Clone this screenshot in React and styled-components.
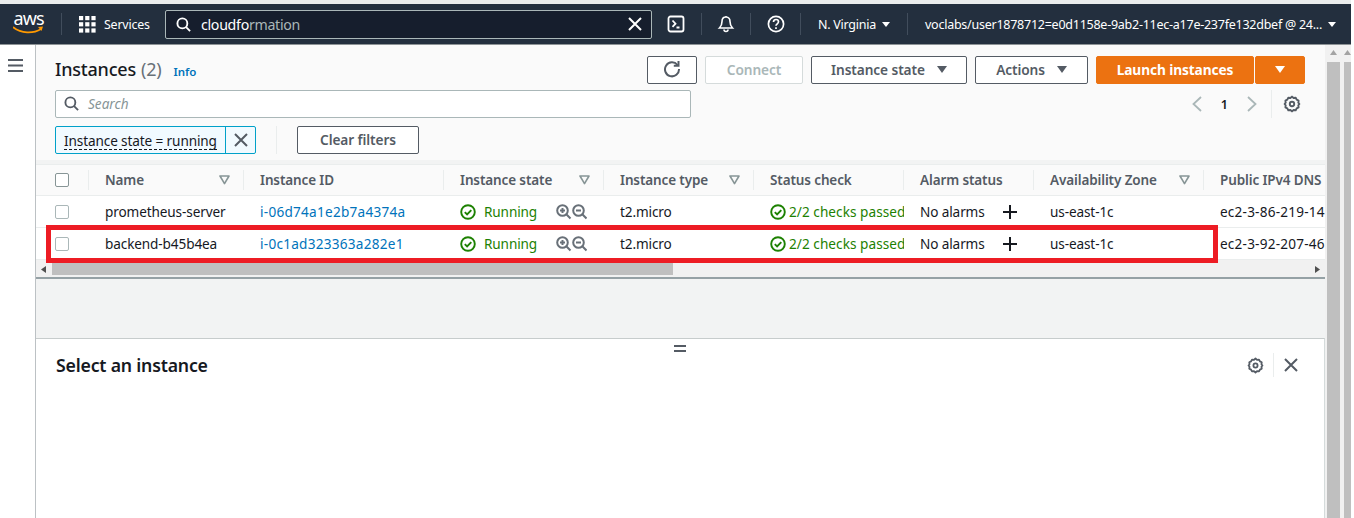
import React from 'react';
import styled, { createGlobalStyle } from 'styled-components';

const FONT = `"Noto Sans", "Open Sans", "Liberation Sans", sans-serif`;

const Global = createGlobalStyle`
  html, body { margin: 0; padding: 0; height: 518px; overflow: hidden; background: #fff; }
  * { box-sizing: border-box; }
  body { font-family: ${FONT}; }
`;

const Page = styled.div`
  width: 1354px; height: 518px; overflow: hidden; display: flex; flex-direction: column; position: relative;
  background: #fff; font-size: 13.6px; color: #16191f;
`;
const TopStrip = styled.div`height: 4px; background: #eaeded; flex: none; width: 1351px;`;
const Header = styled.header`
  height: 41px; flex: none; background: #232f3e; border-bottom: 1px solid #8d9396;
  display: flex; align-items: center; color: #fff; padding-left: 13px; width: 1351px;
`;
const Logo = styled.svg`width: 36px; height: 31px; margin-bottom: 5px; flex: none;`;
const Sep = styled.div`width: 1px; height: 22px; background: #414d5c; flex: none; margin: ${p => p.$m || '0'};`;
const Services = styled.div`display: flex; align-items: center; gap: 8px; font-size: 12.4px; letter-spacing: -0.2px; width: 86px; flex: none;`;
const Grid = styled.svg`width: 17px; height: 17px; flex: none;`;
const SearchBox = styled.div`
  width: 487px; height: 29px; flex: none; background: #161e2d; border: 1px solid #aab7b8; border-radius: 2px;
  display: flex; align-items: center; padding: 0 9px 0 10px; font-size: 14.2px; letter-spacing: -0.3px;
`;
const Typed = styled.span`flex: 1; margin-left: 10px; color: #fff;`;
const Rest = styled.span`color: #aab7b8;`;
const HeadIcon = styled.svg`width: 18px; height: 18px; flex: none; margin: ${p => p.$m || '0'};`;
const Region = styled.div`display: flex; align-items: center; gap: 6px; font-size: 12.5px; letter-spacing: -0.25px; flex: none; white-space: nowrap;`;
const Caret = styled.span`
  width: 0; height: 0; border-left: ${p => p.$s || 4}px solid transparent; border-right: ${p => p.$s || 4}px solid transparent;
  border-top: ${p => (p.$s || 4) * 1.4}px solid ${p => p.$c || '#fff'}; display: inline-block; flex: none;
`;

const Body = styled.div`flex: 1; display: flex; min-height: 0;`;
const SideNav = styled.nav`width: 36px; flex: none; background: #fff; border-right: 1px solid #bcc1c4; padding: 14px 0 0 8px;`;
const Burger = styled.svg`width: 16px; height: 14px; display: block;`;
const Content = styled.main`width: 1289px; flex: none; display: flex; flex-direction: column; background: #f2f3f3;`;

const TopPanel = styled.section`background: #fafafa; padding-top: 11px; height: 115px; flex: none; padding-left: 19px; padding-right: 20px;`;
const TitleRow = styled.div`display: flex; align-items: center; height: 28px;`;
const Title = styled.h1`margin: 0 0 3px; font-size: 18px; font-weight: 500; letter-spacing: -0.2px; color: #16191f;`;
const Count = styled.span`color: #687078; font-weight: 400; margin-left: 5px;`;
const Info = styled.a`color: #0073bb; font-size: 11.5px; font-weight: 600; margin-left: 12px; margin-top: 2px;`;
const Actions = styled.div`margin-left: auto; display: flex; gap: 8px; align-items: center;`;
const Btn = styled.button`
  height: 28px; width: ${p => p.$w}px; background: #fff; border: 1px solid #545b64; border-radius: 2px;
  font: 600 13.7px ${FONT}; color: #545b64; display: flex; align-items: center; justify-content: center; gap: 12px; padding: 0 0 2px;
  letter-spacing: -0.1px;
`;
const DisabledBtn = styled(Btn)`border-color: #d5dbdb; color: #aab7b8;`;
const LaunchGroup = styled.div`display: flex; gap: 1px;`;
const Primary = styled(Btn)`background: #ec7211; border-color: #ec7211; color: #fff; font-weight: 700;`;

const SearchRow = styled.div`display: flex; align-items: center; margin-top: 6px; height: 28px;`;
const TableSearch = styled.div`
  width: 636px; height: 28px; background: #fff; border: 1px solid #aab7b8; border-radius: 2px; display: flex; align-items: center; padding: 0 0 1px 8px; gap: 9px;
  font-size: 13.6px; font-style: italic; color: #879596;
`;
const Pager = styled.div`margin-left: auto; display: flex; align-items: center; margin-right: 4px;`;
const PageNo = styled.span`font-size: 12.5px; font-weight: 600; margin: 0 18px 0 18px;`;
const PagerSep = styled.div`width: 1px; height: 28px; background: #eaeded; margin: 0 11px 0 13px;`;

const FilterRow = styled.div`display: flex; align-items: center; margin-top: 8px; height: 28px;`;
const Token = styled.div`
  display: flex; height: 28px; width: 201px; background: #f1faff; border: 1px solid #00a1c9; border-radius: 2px; flex: none;
`;
const TokenLabel = styled.div`
  width: 170px; display: flex; align-items: center; padding: 1px 0 0 8px; border-right: 1px solid #00a1c9; font-size: 13.6px; letter-spacing: -0.12px; color: #16191f; white-space: nowrap;
`;
const Dashed = styled.span`border-bottom: 1px dashed #16191f; line-height: 17px;`;
const TokenClose = styled.div`flex: 1; display: flex; align-items: center; justify-content: center;`;
const FilterSep = styled.div`width: 1px; height: 28px; background: #eaeded; margin: 0 20px;`;

const TableWrap = styled.section`
  flex: none; background: #fff; margin-top: 4px; border-top: 1px solid #eaeded; border-bottom: 2px solid #95a1a5; height: 115px; display: flex; flex-direction: column;
`;
const Row = styled.div`
  display: grid; grid-template-columns: 53px 155px 200px 160px 150px 150px 130px 170px 121px; height: ${p => p.$h}px; flex: none;
  align-items: center; background: ${p => p.$head ? '#fafafa' : '#fff'}; border-bottom: 1px solid #eaeded; overflow: hidden; font-size: 13.6px; letter-spacing: -0.12px;
`;
const HeadCell = styled.div`
  height: 20px; display: flex; align-items: center; justify-content: space-between; padding: ${p => p.$last ? '0 0 0 16px' : '0 13px 0 16px'}; white-space: nowrap;
  font-weight: 600; color: #545b64; font-size: 13.5px; border-right: ${p => p.$last ? 'none' : '1px solid #eaeded'};
`;
const CheckCell = styled.div`padding-left: 19px; height: 20px; display: flex; align-items: center; border-right: 1px solid ${p => p.$head ? '#eaeded' : 'transparent'};`;
const Check = styled.span`width: 14px; height: 14px; display: block; background: #fff; border: 1px solid ${p => p.$head ? '#879596' : '#aab7b8'}; border-radius: 2px;`;
const Cell = styled.div`padding: 0 ${p => p.$last ? 0 : 15}px 0 16px; white-space: nowrap; overflow: hidden; display: flex; align-items: center; height: 100%;`;
const DnsCell = styled(Cell)`letter-spacing: 0.2px;`;
const IdLink = styled.a`color: #0073bb; letter-spacing: 0.25px;`;
const Good = styled.span`color: #1d8102; display: inline-flex; align-items: center; gap: 8px;`;
const StatusGood = styled(Good)`gap: 3px; letter-spacing: 0.05px;`;
const Zooms = styled.svg`width: 31px; height: 16px; margin-left: 19px; flex: none;`;
const Plus = styled.svg`width: 16px; height: 16px; margin-left: 17px; flex: none;`;

const HScroll = styled.div`height: 17px; background: #f1f1f1; display: flex; align-items: flex-start; padding-top: 3px; flex: none;`;
const ThumbArrow = styled.div`width: ${p => p.$w}px; height: 12px; display: flex; align-items: center; justify-content: center; flex: none;`;
const Thumb = styled.div`width: 621px; height: 12px; background: #bfbfbf; flex: none;`;
const Spacer = styled.div`flex: 1;`;
const HighlightBox = styled.div`
  position: absolute; left: 46px; top: 225px; width: 1172px; height: 38px; border: 5px solid #ed1c24; pointer-events: none;
`;
const Gap = styled.div`height: 59px; flex: none; background: #f2f3f3;`;
const SplitPanel = styled.section`
  flex: 1; background: #fff; border-top: 1px solid #c7cccc; padding: 0 26px 0 20px; position: relative; border-right: 1px solid #d5dbdb;
`;
const Handle = styled.div`
  position: absolute; left: 638px; top: 6px; width: 12px; height: 7px; border-top: 2px solid #545b64; border-bottom: 2px solid #545b64;
`;
const SplitHead = styled.div`display: flex; align-items: center; height: 52px;`;
const SplitTitle = styled.h2`margin: 0; font-size: 17.7px; font-weight: 600; letter-spacing: -0.2px; color: #16191f;`;
const SplitTools = styled.div`margin-left: auto; display: flex; align-items: center;`;
const ToolSep = styled.div`width: 1px; height: 24px; background: #eaeded; margin: 0 10px 0 9px;`;

const Scrollbars = styled.div`width: 26px; flex: none; display: flex; background: #f1f1f1;`;
const VBar = styled.div`width: ${p => p.$w}px; flex: none; margin-left: ${p => p.$l || 0}px; display: flex; flex-direction: column; align-items: center;`;
const VArrow = styled.div`height: 17px; flex: none; display: flex; align-items: center; justify-content: center;`;
const VThumb = styled.div`flex: 1; width: 100%; background: #bfbfbf;`;

const Gear = ({ size = 18, color = '#545b64' }) => (
  <svg width={size} height={size} viewBox="0 0 18 18" fill="none" stroke={color} strokeWidth="1.9">
    <path d="M9 1.6l1.6 1.4 2.1-.3 1 1.9 1.9 1-.3 2.1L16.4 9l-1.1 1.3.3 2.1-1.9 1-1 1.9-2.1-.3L9 16.4l-1.6-1.4-2.1.3-1-1.9-1.9-1 .3-2.1L1.6 9l1.100-1.300-.3-2.100 1.900-1 1-1.900 2.100.3z" strokeLinejoin="round" />
    <circle cx="9" cy="9" r="2.2" />
  </svg>
);
const Cross = ({ size = 14, color = '#545b64', w = 2 }) => (
  <svg width={size} height={size} viewBox="0 0 14 14" fill="none" stroke={color} strokeWidth={w}><path d="M1 1l12 12M13 1L1 13" /></svg>
);
const Loupe = ({ size = 16, color = '#545b64', w = 2 }) => (
  <svg width={size} height={size} viewBox="0 0 16 16" fill="none" stroke={color} strokeWidth={w} style={{ flex: 'none' }}><circle cx="6.8" cy="6.8" r="5.3" /><path d="M10.8 10.8l4.2 4.2" /></svg>
);
const CheckCircle = () => (
  <svg width="16" height="16" viewBox="0 0 16 16" fill="none" stroke="#1d8102" strokeWidth="1.9" style={{ flex: 'none' }}>
    <circle cx="8" cy="8" r="6.8" /><path d="M4.8 8.2l2.3 2.3 4.200-4.400" />
  </svg>
);
const Filter = () => (
  <svg width="11" height="10" viewBox="0 0 11 10" fill="none" stroke="#879596" strokeWidth="1.6" style={{ flex: 'none' }}>
    <path d="M1 1h9L5.500 8.600z" strokeLinejoin="round" />
  </svg>
);
const Chevron = ({ dir }) => (
  <svg width="12" height="16" viewBox="0 0 12 16" fill="none" stroke="#aab7b8" strokeWidth="1.8" style={{ flex: 'none' }}>
    <path d={dir === 'left' ? 'M10 1L2.500 8l7.500 7' : 'M2 1l7.500 7L2 15'} />
  </svg>
);
const Tri = ({ dir }) => {
  const d = { up: 'M0 5l3.500-5L7 5z', left: 'M5 0v7L0 3.500z', right: 'M0 0v7l5-3.500z' }[dir];
  return <svg width="7" height="7" viewBox="0 0 7 7"><path d={d} fill={dir === 'up' ? '#a3a3a3' : '#505050'} /></svg>;
};

const columns = [
  { label: 'Name', filter: true },
  { label: 'Instance ID' },
  { label: 'Instance state', filter: true },
  { label: 'Instance type', filter: true },
  { label: 'Status check' },
  { label: 'Alarm status' },
  { label: 'Availability Zone', filter: true },
  { label: 'Public IPv4 DNS', last: true },
];

const rows = [
  { name: 'prometheus-server', id: 'i-06d74a1e2b7a4374a', dns: 'ec2-3-86-219-14' },
  { name: 'backend-b45b4ea', id: 'i-0c1ad323363a282e1', dns: 'ec2-3-92-207-46' },
];

export default function App() {
  return (
    <Page>
      <Global />
      <TopStrip />
      <Header>
        <Logo viewBox="0 -5 36 31">
          <text x="0.500" y="13.500" fill="#fff" fontSize="18" fontFamily="Noto Sans, sans-serif" letterSpacing="-0.9">aws</text>
          <path d="M0.500 16.500C8 22.500 20 23 28 18" fill="none" stroke="#ff9900" strokeWidth="1.800" strokeLinecap="round" />
          <path d="M25 16l5-.5-1.500 4.500z" fill="#ff9900" />
        </Logo>
        <Sep $m="0 17px 0 12px" />
        <Services>
          <Grid viewBox="0 0 17 17" fill="#fff">
            {[0, 6.200, 12.400].flatMap(y => [0, 6.200, 12.400].map(x => <rect key={`${x}-${y}`} x={x} y={y} width="4.200" height="4.200" />))}
          </Grid>
          Services
        </Services>
        <SearchBox>
          <Loupe color="#fff" size={15} />
          <Typed>cloudfo<Rest>rmation</Rest></Typed>
          <Cross color="#fff" size={14} />
        </SearchBox>
        <HeadIcon $m="0 0 0 15px" viewBox="0 0 18 18" fill="none" stroke="#fff" strokeWidth="1.800">
          <rect x="1.500" y="1.500" width="15" height="15" rx="2" />
          <path d="M5.500 5.500l3 3.200-3 3.200M9.500 12.500h3" />
        </HeadIcon>
        <Sep $m="0 15px 0 16px" />
        <HeadIcon viewBox="0 0 18 18" fill="none" stroke="#fff" strokeWidth="1.600">
          <path d="M9 2c-3 0-4 2.500-4 4.500 0 3.500-1 5-2.500 6.500h13C14 11.500 13 10 13 6.500 13 4.500 12 2 9 2zM9 2V1M7 14.500a2 2 0 0 0 4 0" />
        </HeadIcon>
        <Sep $m="0 16px 0 15px" />
        <HeadIcon viewBox="0 0 18 18" fill="none" stroke="#fff" strokeWidth="1.700">
          <circle cx="9" cy="9" r="7.600" />
          <path d="M6.500 7c0-1.500 1.100-2.500 2.500-2.500s2.500 1 2.500 2.300c0 2-2.500 2-2.500 4" />
          <path d="M9 12.300v1.600" />
        </HeadIcon>
        <Sep $m="0 17px 0 15px" />
        <Region>N. Virginia <Caret $s={4} /></Region>
        <Sep $m="0 17px 0 17px" />
        <Region>voclabs/user1878712=e0d1158e-9ab2-11ec-a17e-237fe132dbef @ 24... <Caret $s={4} /></Region>
      </Header>
      <Body>
        <SideNav>
          <Burger viewBox="0 0 16 14" fill="#545b64">
            <rect x="0" y="0" width="15" height="2" />
            <rect x="0" y="5.500" width="15" height="2" />
            <rect x="0" y="11" width="15" height="2" />
          </Burger>
        </SideNav>
        <Content>
          <TopPanel>
            <TitleRow>
              <Title>Instances<Count>(2)</Count></Title>
              <Info>Info</Info>
              <Actions>
                <Btn $w={50} aria-label="Refresh">
                  <svg width="18" height="18" viewBox="0 0 18 18" fill="none" stroke="#545b64" strokeWidth="2">
                    <path d="M14.500 5A7 7 0 1 0 16 9" /><path d="M15.500 1v4.700h-4.700" />
                  </svg>
                </Btn>
                <DisabledBtn $w={98}>Connect</DisabledBtn>
                <Btn $w={156}>Instance state <Caret $s={5.500} $c="#545b64" /></Btn>
                <Btn $w={113}>Actions <Caret $s={5.500} $c="#545b64" /></Btn>
                <LaunchGroup>
                  <Primary $w={158}>Launch instances</Primary>
                  <Primary $w={50}><Caret $s={5.500} $c="#fff" /></Primary>
                </LaunchGroup>
              </Actions>
            </TitleRow>
            <SearchRow>
              <TableSearch><Loupe size={15} />Search</TableSearch>
              <Pager>
                <Chevron dir="left" />
                <PageNo>1</PageNo>
                <Chevron dir="right" />
                <PagerSep />
                <Gear />
              </Pager>
            </SearchRow>
            <FilterRow>
              <Token>
                <TokenLabel><Dashed>Instance state = running</Dashed></TokenLabel>
                <TokenClose><Cross size={14} /></TokenClose>
              </Token>
              <FilterSep />
              <Btn $w={122}>Clear filters</Btn>
            </FilterRow>
          </TopPanel>
          <TableWrap>
            <Row $head $h={31}>
              <CheckCell $head><Check $head /></CheckCell>
              {columns.map(c => (
                <HeadCell key={c.label} $last={c.last}>
                  <span>{c.label}</span>
                  {c.filter && <Filter />}
                </HeadCell>
              ))}
            </Row>
            {rows.map(r => (
              <Row key={r.id} $h={32}>
                <CheckCell><Check /></CheckCell>
                <Cell>{r.name}</Cell>
                <Cell><IdLink>{r.id}</IdLink></Cell>
                <Cell>
                  <Good><CheckCircle />Running</Good>
                  <Zooms viewBox="0 0 31 16" fill="none" stroke="#687078" strokeWidth="2">
                    <circle cx="6.500" cy="6.500" r="5.300" /><path d="M10.300 10.300l4.200 4.200M4 6.500h5M6.500 4v5" />
                    <circle cx="22.500" cy="6.500" r="5.300" /><path d="M26.300 10.300l4.200 4.200M20 6.500h5" />
                  </Zooms>
                </Cell>
                <Cell>t2.micro</Cell>
                <Cell><StatusGood><CheckCircle />2/2 checks passed</StatusGood></Cell>
                <Cell>No alarms
                  <Plus viewBox="0 0 16 16" stroke="#16191f" strokeWidth="2"><path d="M8 1v14M1 8h14" /></Plus>
                </Cell>
                <Cell>us-east-1c</Cell>
                <DnsCell $last>{r.dns}</DnsCell>
              </Row>
            ))}
            <HScroll>
              <ThumbArrow $w={16}><Tri dir="left" /></ThumbArrow>
              <Thumb />
              <Spacer />
              <ThumbArrow $w={14}><Tri dir="right" /></ThumbArrow>
            </HScroll>
          </TableWrap>
          <Gap />
          <SplitPanel>
            <Handle />
            <SplitHead>
              <SplitTitle>Select an instance</SplitTitle>
              <SplitTools>
                <Gear size={17} />
                <ToolSep />
                <Cross size={14} />
              </SplitTools>
            </SplitHead>
          </SplitPanel>
        </Content>
        <Scrollbars>
          <VBar $w={13} $l={2}>
            <VArrow><Tri dir="up" /></VArrow>
            <VThumb />
          </VBar>
          <VBar $w={7} $l={4}>
            <VArrow><Tri dir="up" /></VArrow>
            <VThumb />
          </VBar>
        </Scrollbars>
      </Body>
      <HighlightBox />
    </Page>
  );
}
